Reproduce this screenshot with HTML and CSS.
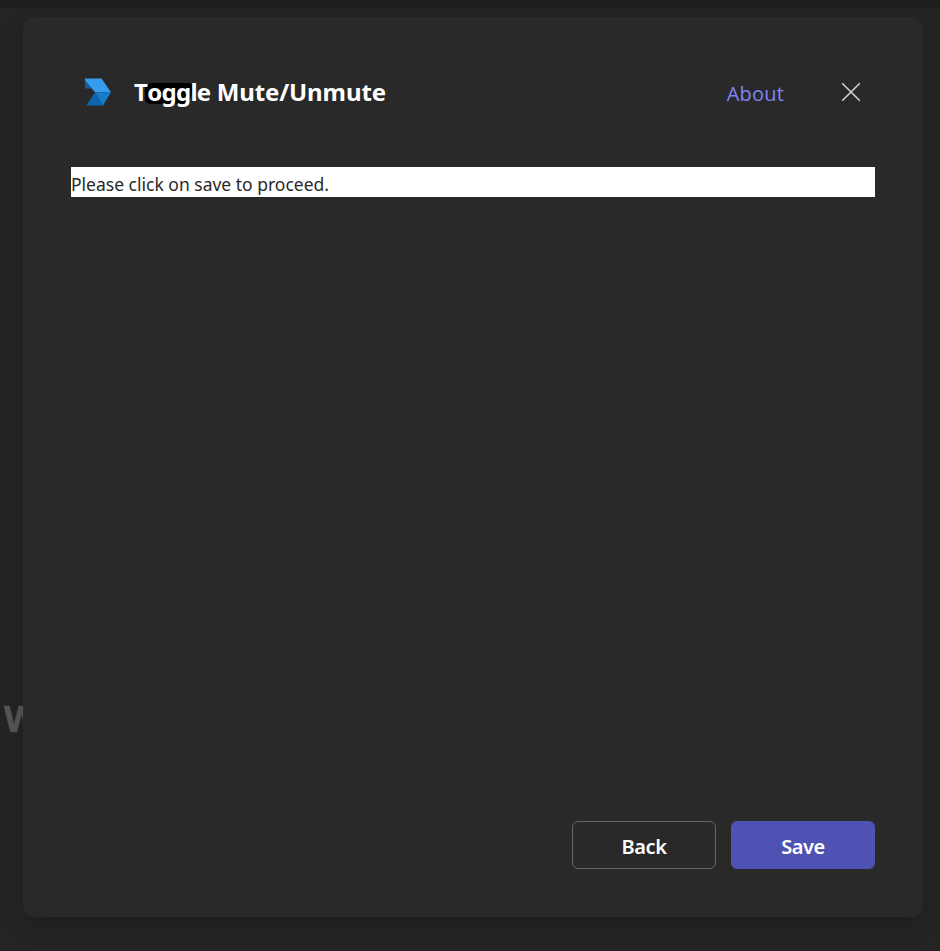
FILE: index.html
```html
<!DOCTYPE html>
<html lang="en">
<head>
<meta charset="utf-8">
<title>Toggle Mute/Unmute</title>
<link rel="stylesheet" href="styles.css">
</head>
<body>
<span class="backdrop-text">W</span>
<main class="dialog">
  <header class="header">
    <svg class="logo" width="28" height="28" viewBox="0 0 28 28">
      <path fill="#145ca3" d="M1 1v9.500h7.500z"/>
      <path fill="#389cee" d="M1 .5h16.500L27 14.200H11L1 2z"/>
      <path fill="#0e64b1" d="M11 14.200L2.500 27.500H19z"/>
      <path fill="#177ccc" d="M11 14.200h16l-8 13.300z"/>
    </svg>
    <h1 class="title"><span class="verb">T<span class="mark">ogg</span>le</span> Mute/Unmute</h1>
    <a class="about">About</a>
    <svg class="close" width="20" height="20" viewBox="0 0 20 20"><path d="M1.200 1.200l17.600 17.600M18.800 1.200L1.200 18.800" stroke="#d4d4d4" stroke-width="1.500" fill="none"/></svg>
  </header>
  <p class="message">Please click on save to proceed.</p>
  <footer class="actions">
    <button class="button">Back</button>
    <button class="button primary">Save</button>
  </footer>
</main>
</body>
</html>
```

FILE: styles.css
```css
* { box-sizing: border-box; }
body {
  margin: 0;
  height: 951px;
  padding: 17px 17px 34px 23px;
  overflow: hidden;
  background: linear-gradient(#1f1f1f 8px, #242424 8px);
  font-family: "Open Sans", "Noto Sans", sans-serif;
}
.backdrop-text {
  position: absolute;
  left: 4px;
  top: 694px;
  font: 700 36px/50px "Open Sans", sans-serif;
  color: #565656;
  -webkit-text-stroke: .6px #565656;
}
.dialog {
  position: relative;
  display: flex;
  flex-direction: column;
  width: 900px;
  height: 900px;
  padding: 50px 48px 48px;
  border-radius: 12px;
  background: #292929;
  box-shadow: 0 8px 24px rgba(0, 0, 0, .16);
}
.header {
  display: flex;
  align-items: center;
  height: 50px;
  padding: 0 14px 0 13px;
}
.logo { margin-right: 22px; }
.title {
  position: relative;
  z-index: 0;
  margin: 0;
  flex: 1;
  font: bold 24px/34px "Noto Sans", sans-serif;
  letter-spacing: -.1px;
  color: #fff;
  white-space: nowrap;
}
.verb { letter-spacing: -.7px; }
.mark {
  position: relative;
}
.mark::before {
  content: "";
  position: absolute;
  z-index: -1;
  left: -2px;
  right: -2px;
  top: 8px;
  height: 21px;
  border-radius: 9px 3px 9px 5px / 5px 3px 12px 5px;
  background: #000;
}
.about {
  margin: 3px 57px 0 0;
  font-size: 20px;
  line-height: 28px;
  letter-spacing: .2px;
  color: #7f85f5;
}
.message {
  margin: 50px 0 0;
  height: 30px;
  background: #fff;
  font: 17.500px/34px "Noto Sans", sans-serif;
  color: #292929;
}
.actions {
  display: flex;
  justify-content: flex-end;
  gap: 15px;
  margin-top: auto;
}
.button {
  width: 144px;
  height: 48px;
  padding: 3px 0 0;
  border: 1px solid #666;
  border-radius: 6px;
  background: #292929;
  color: #fff;
  font: 600 20px/28px "Noto Sans", sans-serif;
  letter-spacing: -.4px;
}
.primary { background: #4f52b2; border-color: #4f52b2; }
```
